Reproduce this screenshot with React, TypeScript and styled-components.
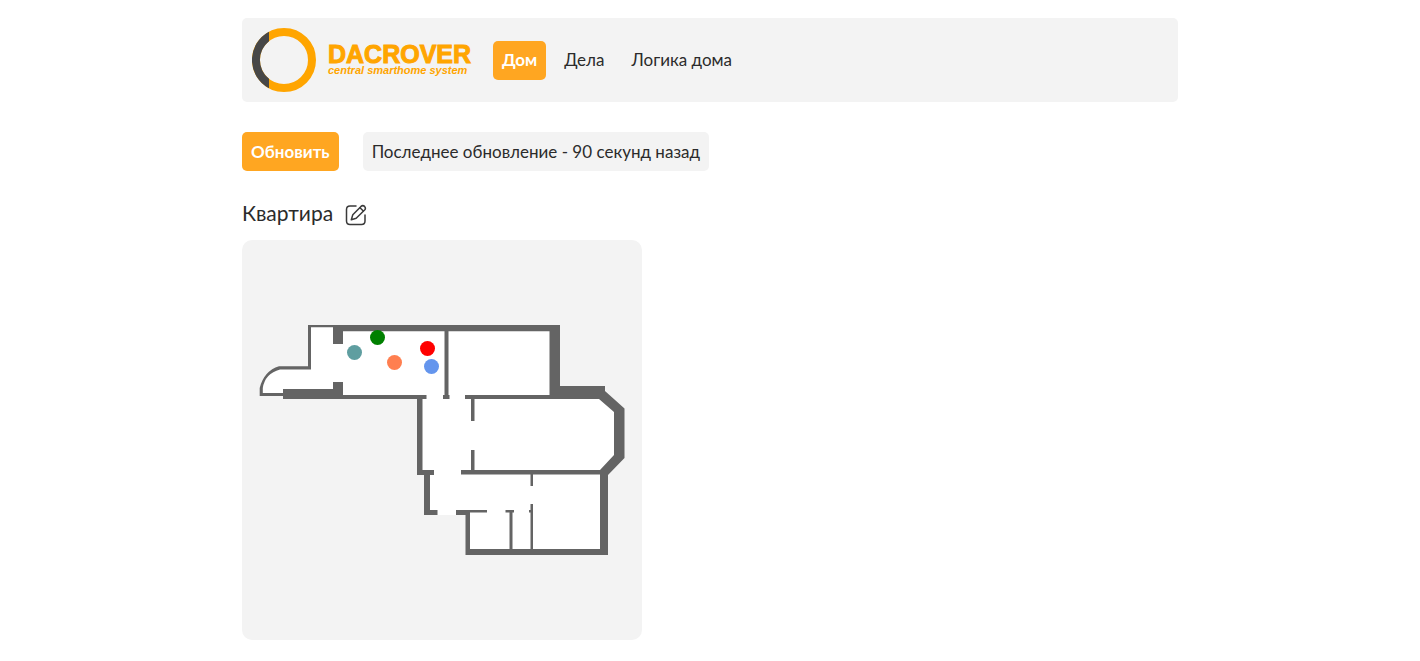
import React from 'react';
import styled, { createGlobalStyle } from 'styled-components';

const GlobalStyle = createGlobalStyle`
  *, *::before, *::after { box-sizing: border-box; }
  body {
    margin: 0;
    background: #fff;
    color: #2b2b2b;
    font-family: Lato, 'Noto Sans', sans-serif;
    font-size: 17px;
    line-height: 19px;
  }
`;

const Page = styled.div`
  max-width: 984px;
  margin: 0 auto;
  padding: 18px 24px 21px;
`;

const Header = styled.header`
  display: flex;
  align-items: center;
  gap: 20px;
  padding: 10px;
  border-radius: 5px;
  background: #f3f3f3;
`;

const LogoLink = styled.a`
  display: flex;
  align-items: center;
  gap: 12px;
  color: #ffa500;
  text-decoration: none;
`;

const LogoText = styled.span`
  display: flex;
  flex-direction: column;
  width: 145px;
  padding-bottom: 2px;
  font-family: 'Liberation Sans', Arial, sans-serif;
  font-weight: 700;
  white-space: nowrap;
`;

const LogoName = styled.span`
  font-size: 25px;
  line-height: 22px;
  -webkit-text-stroke: 1px currentColor;
`;

const LogoTagline = styled.span`
  font-size: 11px;
  line-height: 10px;
  font-style: italic;
`;

const Nav = styled.nav`
  display: flex;
  gap: 9px;
`;

const NavLink = styled.a<{ $active?: boolean }>`
  padding: 9px 9px 11px;
  border-radius: 5px;
  background: ${(p) => (p.$active ? '#ffa621' : 'transparent')};
  color: ${(p) => (p.$active ? '#fff' : 'inherit')};
  font-weight: ${(p) => (p.$active ? 700 : 400)};
  text-decoration: none;
`;

const Toolbar = styled.div`
  display: flex;
  gap: 24px;
  margin-top: 30px;
`;

const RefreshButton = styled.button`
  padding: 10px 9px;
  border: 0;
  border-radius: 5px;
  background: #ffa621;
  color: #fff;
  font: inherit;
  font-weight: 700;
  cursor: pointer;
`;

const Status = styled.p`
  margin: 0;
  padding: 10px 9px;
  border-radius: 5px;
  background: #f3f3f3;
`;

const TitleRow = styled.div`
  display: flex;
  align-items: flex-start;
  gap: 12px;
  margin: 29px 0 14px;
`;

const Title = styled.h1`
  margin: 0;
  font-size: 21px;
  line-height: 25px;
  font-weight: 400;
`;

const EditButton = styled.button`
  display: flex;
  margin-top: 4px;
  padding: 0;
  border: 0;
  background: none;
  color: #3a3a3a;
  cursor: pointer;
`;

const PlanCard = styled.section`
  position: relative;
  width: 400px;
  max-width: 100%;
  border-radius: 10px;
  background: #f3f3f3;

  svg {
    display: block;
    width: 100%;
  }
`;

const Pin = styled.button<{ $x: number; $y: number; $color: string }>`
  position: absolute;
  left: ${(p) => p.$x}px;
  top: ${(p) => p.$y}px;
  width: 15px;
  height: 15px;
  padding: 0;
  border: 0;
  border-radius: 50%;
  background: ${(p) => p.$color};
  cursor: pointer;
`;

const links = [
  { label: 'Дом', active: true },
  { label: 'Дела' },
  { label: 'Логика дома' },
];

const pins = [
  { x: 105, y: 105, color: 'cadetblue' },
  { x: 128, y: 90, color: 'green' },
  { x: 145, y: 115, color: 'coral' },
  { x: 178, y: 101, color: 'red' },
  { x: 182, y: 119, color: 'cornflowerblue' },
];

const LogoRing = () => (
  <svg width="64" height="64" viewBox="0 0 64 64" aria-hidden="true">
    <circle cx="32" cy="32" r="28" fill="none" stroke="#ffa500" strokeWidth="8" />
    <path d="M17 3.700A32 32 0 0 0 17 60.300V50.800A24 24 0 0 1 17 13.200Z" fill="#474747" />
  </svg>
);

const EditIcon = () => (
  <svg
    width="22"
    height="22"
    viewBox="0 0 22 22"
    fill="none"
    stroke="currentColor"
    strokeWidth="1.5"
    strokeLinecap="round"
    strokeLinejoin="round"
    aria-hidden="true"
  >
    <path d="M11 2H5Q1.500 2 1.500 5.500V17Q1.500 20.500 5 20.500H16.500Q20 20.500 20 17V11" />
    <path d="M6.300 15.700 7.800 10.800 16 2.400Q17.800 .8 19.600 2.400 21.200 4.200 19.600 6L11.200 14.200Z" />
    <path d="M15 3.800 18.300 7" />
  </svg>
);

const FloorPlan = () => (
  <svg viewBox="0 0 400 400" role="img" aria-label="План квартиры">
    <path
      fill="#fff"
      d="M67 86H317V148H361L381 170V217L365 234V314H225V275H184V234H177V158H42V155H19V148Q23 133 38 128H67Z"
    />
    <g fill="#646464">
      {/* balcony */}
      <path d="M66 85H91V87.300H69V129.500H38Q23 133.500 20.800 148V153H41V156H17.700V148Q22 131 37 126.300H66Z" />
      {/* outer walls and the walls joined to them */}
      <path d="M91 85H318V146H363V151L382.500 168.500V218L366 235V315H223.500V275H214V270H245V272.500H228V309H358V234.500H219V230H358L372 215V172L357 159H223V155H307.500V91.300H101V104H91Z" />
      <path d="M91 142H101V155H184.500V159H180.500V230H192V235H188V270H195.500V275H182V235H175V159H41V149H91Z" />
      {/* partitions */}
      <path d="M202.500 91H206.500V155H207.500V159H201V155H202.500Z" />
      <path d="M229 159H232.500V181H229ZM229 210H232.500V230H229Z" />
      <path d="M263.500 270H272V272.500H270.500V309H267.500V272.500H263.500Z" />
      <path d="M288.500 234H291V246H288.500ZM288.500 264H291V309H288.500V272.500H287V270H288.500Z" />
    </g>
  </svg>
);

export default function App() {
  return (
    <>
      <GlobalStyle />
      <Page>
        <Header>
          <LogoLink href="#home">
            <LogoRing />
            <LogoText>
              <LogoName>DACROVER</LogoName>
              <LogoTagline>central smarthome system</LogoTagline>
            </LogoText>
          </LogoLink>
          <Nav>
            {links.map((l) => (
              <NavLink key={l.label} href="#" $active={l.active}>
                {l.label}
              </NavLink>
            ))}
          </Nav>
        </Header>
        <main>
          <Toolbar>
            <RefreshButton type="button">Обновить</RefreshButton>
            <Status>Последнее обновление - 90 секунд назад</Status>
          </Toolbar>
          <TitleRow>
            <Title>Квартира</Title>
            <EditButton type="button" aria-label="Редактировать">
              <EditIcon />
            </EditButton>
          </TitleRow>
          <PlanCard>
            <FloorPlan />
            {pins.map((p) => (
              <Pin key={p.color} type="button" aria-label="Датчик" $x={p.x} $y={p.y} $color={p.color} />
            ))}
          </PlanCard>
        </main>
      </Page>
    </>
  );
}
